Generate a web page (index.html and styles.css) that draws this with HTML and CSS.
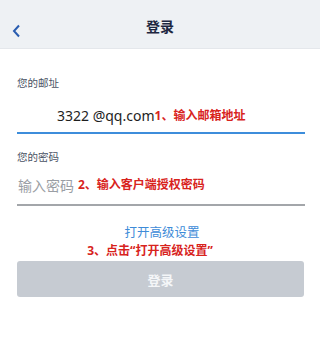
FILE: index.html
```html
<!DOCTYPE html>
<html lang="zh-CN">
<head>
<meta charset="utf-8">
<link rel="stylesheet" href="styles.css">
</head>
<body>
<header class="topbar">
  <span class="back">
    <svg width="10" height="14" viewBox="0 0 10 14"><polyline points="7,1.5 2,7 7,12.5" fill="none" stroke="#2a5db0" stroke-width="2" stroke-linejoin="miter"/></svg>
  </span>
  <h1 class="title">登录</h1>
</header>
<main class="form">
  <div class="label first">您的邮址</div>
  <div class="field active">
    <span class="value">3322 @qq.com</span><span class="note">1、输入邮箱地址</span>
  </div>
  <div class="label second">您的密码</div>
  <div class="field pwd">
    <span class="placeholder">输入密码</span><span class="note">2、输入客户端授权密码</span>
  </div>
  <div class="advanced">打开高级设置</div>
  <div class="note center">3、点击“打开高级设置”</div>
  <button class="submit">登录</button>
</main>
</body>
</html>
```
FILE: styles.css
```css
html, body {
  margin: 0;
  padding: 0;
  background: #ffffff;
  font-family: "Noto Sans", "Noto Sans CJK SC", sans-serif;
}
.topbar {
  height: 48px;
  background: #eef1f4;
  border-bottom: 1px solid #e4e7eb;
  display: flex;
  align-items: center;
  justify-content: center;
  position: relative;
}
.back {
  position: absolute;
  left: 12px;
  top: 24px;
  width: 10px;
  height: 14px;
  display: block;
}
.back svg { display: block; }
.title {
  margin: 0;
  font-size: 14px;
  font-weight: 700;
  color: #1d2640;
  font-family: "Noto Sans CJK SC", sans-serif;
  line-height: 20px;
  padding-top: 4px;
}
.form {
  padding: 0 15px 0 17px;
  display: flex;
  flex-direction: column;
}
.label {
  font-size: 10.5px;
  line-height: 16px;
  color: #4a5263;
  font-family: "Noto Sans CJK SC", sans-serif;
}
.label.first { margin-top: 26px; }
.label.second { margin-top: 15px; }
.field {
  display: flex;
  align-items: center;
  height: 34px;
  border-bottom: 2px solid #a3a6aa;
}
.field.active {
  margin-top: 7px;
  border-bottom-color: #3d8ddb;
  padding-left: 40px;
  padding-top: 1px;
  height: 33px;
}
.field.pwd {
  margin-top: 1px;
  height: 38px;
}
.value {
  font-size: 14px;
  color: #1e1e1e;
  font-family: "Noto Sans", sans-serif;
}
.placeholder {
  font-size: 14px;
  color: #9a9ea4;
  font-family: "Noto Sans CJK SC", sans-serif;
  margin-right: 4px;
  margin-left: 1px;
}
.note {
  font-size: 12px;
  font-weight: 700;
  color: #d8231d;
  font-family: "Noto Sans", "Noto Sans CJK SC", sans-serif;
  line-height: 16px;
}
.note.center {
  text-align: center;
  margin-top: 3px;
  margin-right: 22px;
}
.advanced {
  margin-top: 18px;
  text-align: center;
  font-size: 12.5px;
  line-height: 16px;
  color: #3d8bd8;
  font-family: "Noto Sans CJK SC", sans-serif;
  margin-right: -2px;
}
.submit {
  margin-top: 2px;
  margin-right: 1px;
  height: 36px;
  border: none;
  border-radius: 3px;
  background: #c6cbd2;
  color: #f4f6f8;
  font-size: 13px;
  font-weight: 700;
  font-family: "Noto Sans CJK SC", sans-serif;
  padding: 0;
}
```
